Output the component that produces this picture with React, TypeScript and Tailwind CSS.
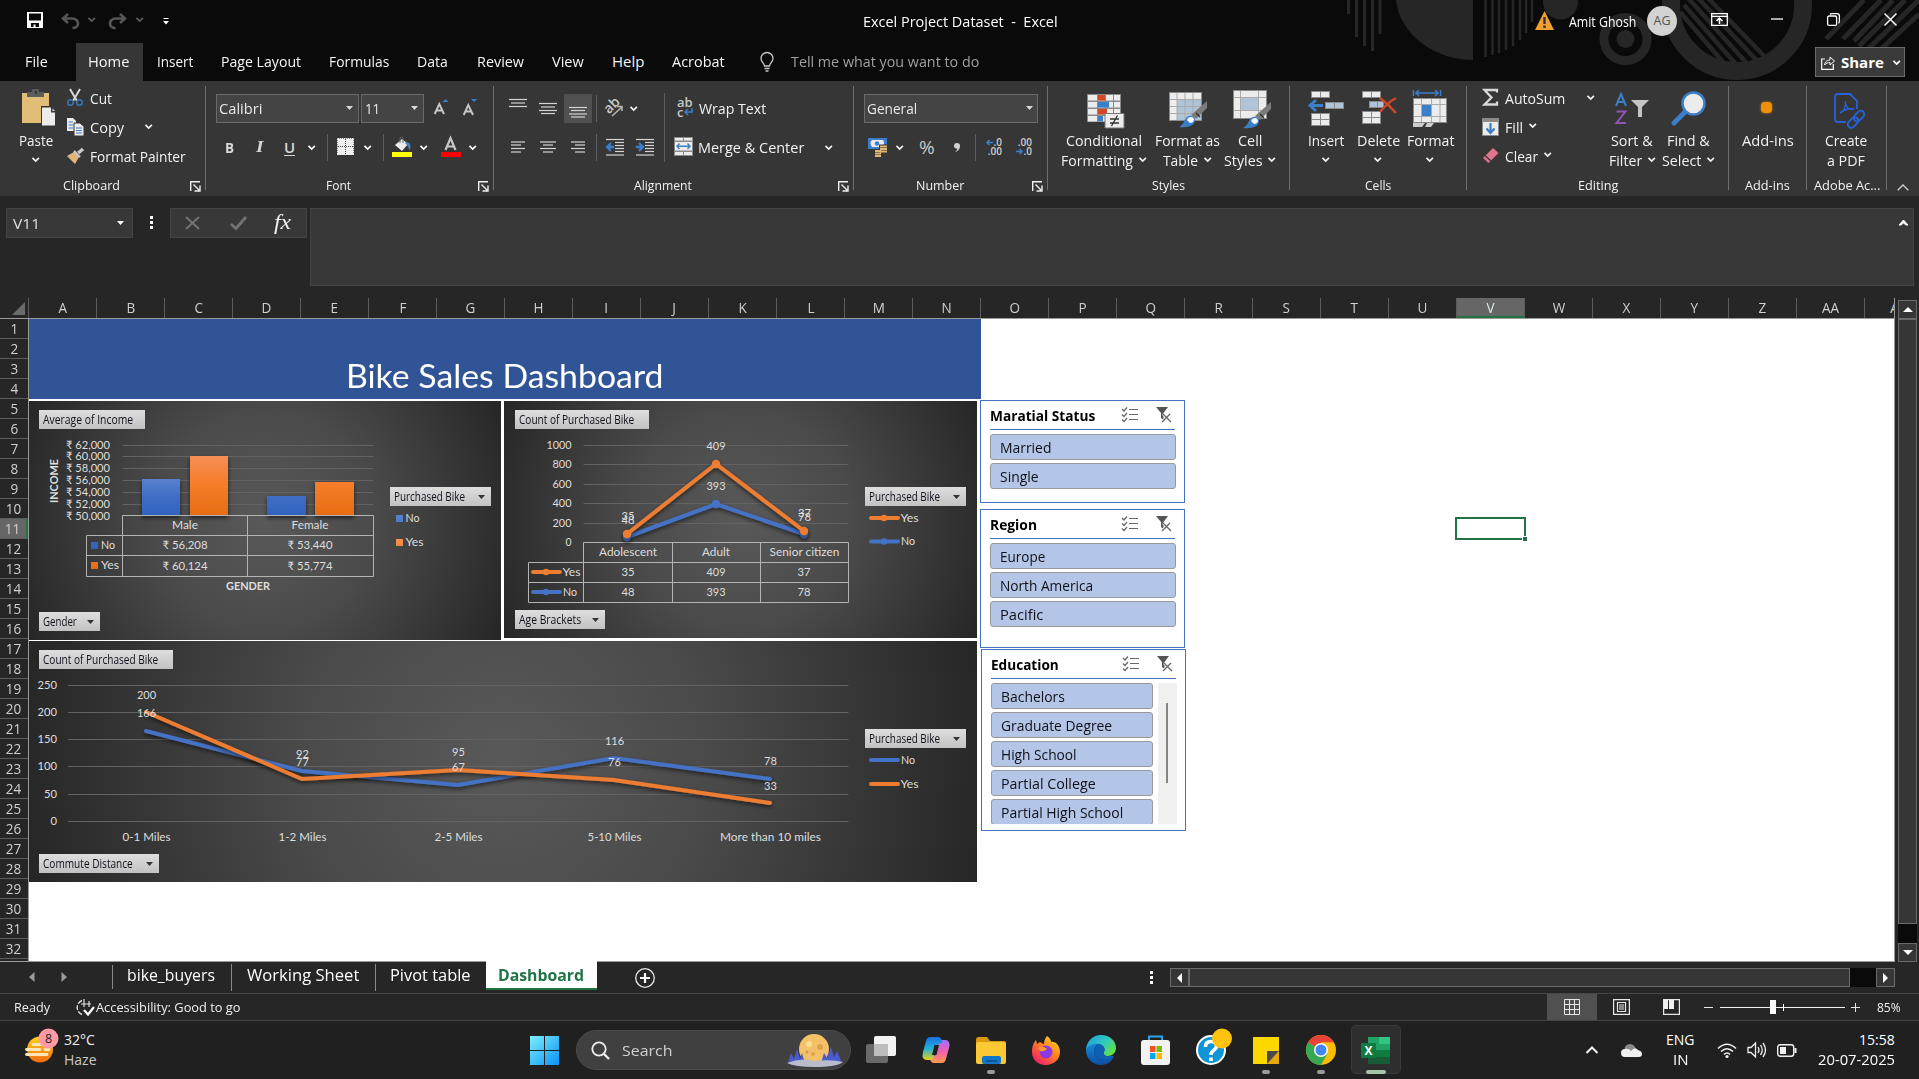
import React, { useLayoutEffect, useRef, useState } from "react";

type Kids = { children?: React.ReactNode };

/* One line of text condensed or widened to a known width. */
function Label({ w, className = "", children }: Kids & { w: number; className?: string }) {
  const ref = useRef<HTMLSpanElement>(null);
  const [scale, setScale] = useState(1);
  useLayoutEffect(() => {
    if (ref.current && ref.current.offsetWidth) setScale(w / ref.current.offsetWidth);
  }, [w]);
  return (
    <span className={"inline-block shrink-0 whitespace-pre " + className} style={{ width: w }}>
      <span ref={ref} className="inline-block origin-left" style={{ transform: `scaleX(${scale})` }}>
        {children}
      </span>
    </span>
  );
}

function Icon({ w, h, className = "", children }: Kids & { w: number; h: number; className?: string }) {
  return (
    <svg width={w} height={h} viewBox={`0 0 ${w} ${h}`} fill="none" className={"shrink-0 overflow-visible " + className}>
      {children}
    </svg>
  );
}

const Chevron = ({ className = "" }: { className?: string }) => (
  <Icon w={8} h={5} className={className}>
    <path d="M.5 .8 3.700 4 6.900 .8" stroke="currentColor" strokeWidth="1.700" />
  </Icon>
);
const Caret = ({ className = "" }: { className?: string }) => (
  <Icon w={7} h={4} className={className}>
    <path d="M0 0H7L3.5 4Z" fill="currentColor" />
  </Icon>
);
const Sep = ({ className = "" }: { className?: string }) => (
  <div className={"h-[27px] w-px shrink-0 bg-[#5e5e5e] " + className} />
);

/* ---------- Title bar ---------- */

function Backdrop() {
  const c = "#262626";
  return (
    <svg className="absolute right-0 top-0" width="579" height="81" viewBox="1340 0 579 81" fill="none">
      <g stroke={c} strokeWidth="3">
        <path d="M1348.500 0V14M1356.500 0V37M1364.500 0V46M1372.500 0V51M1380 0V34" />
      </g>
      <path d="M1396 0H1473V60C1436 60 1400 36 1396 0Z" fill={c} />
      <g stroke={c} strokeWidth="2.500">
        <path d="M1485.500 0V57M1492.500 0V55M1499 0V53M1506 0V50M1513 0V46M1520 0V40M1526 0V33M1532 0V22" />
      </g>
      <circle cx="1560.500" cy="2" r="17.500" fill={c} />
      <circle cx="1625.500" cy="39" r="21.500" stroke={c} strokeWidth="9" />
      <circle cx="1625.500" cy="39" r="9" fill={c} />
      <circle cx="1737" cy="5" r="66" stroke={c} strokeWidth="18" />
      <g stroke={c} strokeWidth="4.500">
        <path d="M1680 12 1729 69M1684 5 1741 70M1688 -2 1752 69M1697 -3 1762 66M1707 -3 1770 62" />
      </g>
      <g stroke={c} strokeWidth="5">
        <path d="M1864 0 1826 39M1881 0 1843 39M1893 0 1854 41M1905 0 1859 46M1919 0 1867 50M1919 14 1880 50" />
      </g>
    </svg>
  );
}

function TitleRow() {
  return (
    <div className="relative flex h-[43px] items-center text-[13px] text-white">
      <Icon w={17} h={17} className="ml-[27px] mt-[-2px]">
        <path d="M0 0H16V16H0Z" fill="#fff" />
        <path d="M2 1.500H14V8.500H2ZM4 11H12V15H4Z" fill="#0a0a0a" />
        <path d="M6.500 12.500h2V16h-2z" fill="#fff" />
      </Icon>
      <Icon w={18} h={16} className="ml-[17px] mt-[-2px]">
        <path d="M7 1 2 5.500 7 10M2.500 5.500H11C15 5.500 17 8 17 10.500C17 13 15 15 11.500 15" stroke="#565656" strokeWidth="2.600" />
      </Icon>
      <Chevron className="ml-[9px] mt-[-4px] text-[#5d5d5d]" />
      <Icon w={18} h={16} className="ml-[13px] mt-[-2px]">
        <path d="M11 1 16 5.500 11 10M15.500 5.500H7C3 5.500 1 8 1 10.500C1 13 3 15 6.500 15" stroke="#565656" strokeWidth="2.600" />
      </Icon>
      <Chevron className="ml-[9px] mt-[-4px] text-[#5d5d5d]" />
      <Icon w={6} h={7} className="ml-[19px]">
        <path d="M.5 .5H5.500" stroke="#fff" /><path d="M0 3H6L3 6.500Z" fill="#fff" />
      </Icon>
      <Label w={195} className="ml-[694px] text-[14px]">Excel Project Dataset  -  Excel</Label>
      <Icon w={19} h={19} className="ml-[477px] mt-[-2px]">
        <path d="M9.500 0 19 19H0Z" fill="#f0a030" />
        <path d="M9.500 6V13M9.500 14.500V17" stroke="#30343a" strokeWidth="2.400" />
      </Icon>
      <Label w={67} className="ml-[15px] mt-[-1px] text-[14px]">Amit Ghosh</Label>
      <div className="ml-[11px] mt-[-1px] flex size-[30px] items-center justify-center rounded-full bg-[#d2d2d2] text-[12.500px] text-[#555]">
        <Label w={17}>AG</Label>
      </div>
      <Icon w={17} h={13} className="ml-[34px] mt-[-4px]">
        <path d="M.7 .7H16.300V12.300H.7ZM.7 3.300H16.300" stroke="#fff" strokeWidth="1.300" />
        <path d="M8.500 11V5M5.500 8 8.500 5 11.500 8" stroke="#fff" strokeWidth="1.500" />
      </Icon>
      <Icon w={12} h={2} className="ml-[43px] mt-[-6px]"><path d="M0 1H12" stroke="#fff" strokeWidth="1.300" /></Icon>
      <Icon w={13} h={13} className="ml-[44px] mt-[-4px]">
        <rect x=".6" y="3" width="9" height="9.400" rx="1.500" stroke="#fff" strokeWidth="1.300" />
        <path d="M3 1.500C3.500 .8 4 .6 5 .6H10Q12.400 .6 12.400 3V8Q12.400 9.500 11.500 10.200" stroke="#fff" strokeWidth="1.300" />
      </Icon>
      <Icon w={13} h={13} className="ml-[44px] mt-[-4px]"><path d="M.5 .5 12.500 12.500M12.500 .5 .5 12.500" stroke="#fff" strokeWidth="1.500" /></Icon>
    </div>
  );
}

const tabs: [string, number, string][] = [
  ["Insert", 36, "ml-[14px]"], ["Page Layout", 80, "ml-[28px]"], ["Formulas", 60, "ml-[28px]"],
  ["Data", 31, "ml-[28px]"], ["Review", 47, "ml-[29px]"], ["View", 32, "ml-[28px]"],
  ["Help", 32, "ml-[28px]"], ["Acrobat", 53, "ml-[28px]"],
];

function TabRow() {
  return (
    <div className="relative flex h-[38px] items-center text-[15px] leading-5 text-[#f5f5f5]">
      <Label w={23} className="ml-[25px] -mt-[2px]">File</Label>
      <div className="ml-[28px] flex h-full w-[67px] items-center bg-[#363636] pb-[2px] pl-[12px]">
        <Label w={41}>Home</Label>
      </div>
      {tabs.map(([t, w, m]) => <Label key={t} w={w} className={"-mt-[2px] " + m}>{t}</Label>)}
      <Icon w={14} h={20} className="ml-[35px]">
        <path d="M4.500 14C4.500 11 1 10 1 6.500A6 6 0 0 1 13 6.500C13 10 9.500 11 9.500 14ZM4.500 16.500H9.500M5.500 19H8.500" stroke="#c8c8c8" strokeWidth="1.300" />
      </Icon>
      <Label w={188} className="-mt-[2px] ml-[17px] text-[#a0a0a0]">Tell me what you want to do</Label>
      <div className="ml-auto mr-[14px] flex h-[30px] w-[90px] shrink-0 items-center border border-[#6b6b6b] bg-[#3a3a3a] text-white">
        <Icon w={14} h={15} className="ml-[5px]">
          <path d="M4 4H.7V14.300H12.300V9" stroke="#fff" strokeWidth="1.200" />
          <path d="M3.500 10C4 6 7 5 9 5V2L13.500 6 9 10V7.500C7 7.500 5 8 3.500 10Z" stroke="#fff" strokeWidth="1" />
        </Icon>
        <Label w={43} className="-mt-px ml-[6px] text-[15px] font-bold">Share</Label>
        <Chevron className="ml-[9px]" />
      </div>
    </div>
  );
}

/* ---------- Ribbon ---------- */

function Group({ className, label, lw, launcher, children }: Kids & { className: string; label: string; lw: number; launcher?: boolean }) {
  return (
    <div className={"mt-[5px] flex h-[104px] shrink-0 flex-col border-r border-[#6e6e6e] " + className}>
      <div className="flex h-[90px] shrink-0">{children}</div>
      <div className={"relative flex h-[18px] shrink-0 items-center justify-center text-[13px] leading-[18px] " + (launcher ? "pr-[22px]" : "")}>
        <Label w={lw}>{label}</Label>
        {launcher && (
          <Icon w={11} h={11} className="absolute right-[4px] top-[5px]">
            <path d="M.7 10V.7H10M3.500 3.500 9 9M10 4.500V10H4.500" stroke="#f0f0f0" strokeWidth="1.400" />
          </Icon>
        )}
      </div>
    </div>
  );
}

function Big({ className, icon, a, aw, b, bw, chev }: { className: string; icon: React.ReactNode; a: string; aw: number; b?: string; bw?: number; chev?: boolean }) {
  return (
    <div className={"flex shrink-0 flex-col items-center leading-5 " + className}>
      <div className="flex h-[44px] items-center justify-center">{icon}</div>
      <Label w={aw} className="h-5">{a}</Label>
      <div className="flex h-5 items-center gap-[6px]">
        {b && <Label w={bw || 20}>{b}</Label>}
        {chev && <Chevron className="-mt-[2px]" />}
      </div>
    </div>
  );
}

const lines = (rows: number[][]) => rows.map((r, i) => <path key={i} d={`M${r[0]} ${r[2]}H${r[1]}`} stroke="#d4d4d4" strokeWidth="1.200" />);

const Brush = () => (
  <>
    <path d="M38 10V17L27 28 22 24Z" fill="#7b7b7b" />
    <path d="M27 22 31 26" stroke="#333" strokeWidth="1.500" />
    <path d="M10 36C14 34 15 31 17 27C20 23 26 25 26 29C26 34 20 37 10 36Z" fill="#3b7fc9" />
    <path d="M18 29C19 25 25 25 25 29C24 32 21 33 20 31Z" fill="#fff" />
  </>
);

function ClipboardGroup() {
  return (
    <Group className="w-[206px]" label="Clipboard" lw={57} launcher>
      <Big className="ml-[8px] w-[56px]" a="Paste" aw={34} chev icon={
        <Icon w={34} h={38} className="ml-[6px]">
          <path d="M0 4H27V34H0Z" fill="#e1bd78" />
          <path d="M5 3H10V1Q10 0 11 0H16Q17 0 17 1V3H22V8H5Z" fill="#5c5c5c" />
          <path d="M13 2h2v3h-2z" fill="#333" />
          <path d="M19 17H29L34.500 23V38H19Z" fill="#363636" />
          <path d="M20 18.500H29V23.500H33V36.500H20Z" fill="#ececec" /><path d="M30.500 19.500 33 22H30.500Z" fill="#ececec" />
        </Icon>} />
      <div className="mt-[-3px] ml-[3px] flex flex-col">
        <div className="flex h-[29px] items-center">
          <Icon w={16} h={17}>
            <path d="M3 0 10 12M13 0 6 12" stroke="#d8d8d8" strokeWidth="2" />
            <circle cx="3.500" cy="13.500" r="2.800" stroke="#3a78b8" strokeWidth="1.500" /><circle cx="12.500" cy="13.500" r="2.800" stroke="#3a78b8" strokeWidth="1.500" />
          </Icon>
          <Label w={22} className="ml-[7px]">Cut</Label>
        </div>
        <div className="flex h-[29px] items-center">
          <Icon w={17} h={18}>
            <path d="M0 0H6L9 3V13H0Z" fill="#ececec" /><path d="M1.500 4H6M1.500 7H6M1.500 10H6" stroke="#3b7fc9" strokeWidth="1.200" />
            <path d="M7 5H13L17 8.500V18H7Z" fill="#ececec" stroke="#363636" /><path d="M9 10H15M9 12.500H15M9 15H15" stroke="#3b7fc9" strokeWidth="1.200" />
          </Icon>
          <Label w={34} className="ml-[6px]">Copy</Label>
          <Chevron className="ml-[21px]" />
        </div>
        <div className="flex h-[29px] items-center">
          <Icon w={17} h={16}>
            <path d="M0 8 7 4 12 9 8 16Z" fill="#e1b577" /><path d="M7 3 13 9" stroke="#c8c8c8" strokeWidth="2.500" /><path d="M10 6 16 1" stroke="#c8c8c8" strokeWidth="3.500" /><path d="M8.500 2.500 13.500 8" stroke="#444" strokeWidth=".8" />
          </Icon>
          <Label w={96} className="ml-[6px]">Format Painter</Label>
        </div>
      </div>
    </Group>
  );
}

function FontGroup() {
  const box = "flex h-[29px] items-center border border-[#6a6a6a] bg-[#444] pb-[2px] text-[#e8e8e8] shrink-0 ";
  return (
    <Group className="w-[288px]" label="Font" lw={25} launcher>
      <div className="flex flex-col pl-[10px] pt-[8px]">
        <div className="flex items-center">
          <div className={box + "w-[143px] pl-[2px]"}><Label w={43}>Calibri</Label><Caret className="ml-auto mr-[5px] text-[#d8d8d8]" /></div>
          <div className={box + "ml-[2px] w-[63px] pl-[3px]"}><Label w={15}>11</Label><Caret className="ml-auto mr-[5px] text-[#d8d8d8]" /></div>
          <Icon w={15} h={16} className="ml-[10px] -mt-[4px]">
            <path d="M.7 15 5.300 5 10 15M2.300 11.500H8.300" stroke="#c8c8c8" strokeWidth="1.900" /><path d="M8.500 3 11.500 0 14.500 3Z" fill="#3b7fc9" />
          </Icon>
          <Icon w={15} h={16} className="ml-[14px] -mt-[3px]">
            <path d="M.7 16 5.300 6 10 16M2.300 12.500H8.300" stroke="#c8c8c8" strokeWidth="1.900" /><path d="M8 0 11 3 14 0Z" fill="#3b7fc9" />
          </Icon>
        </div>
        <div className="mt-[10px] flex h-[28px] items-center text-[#d8d8d8]">
          <Label w={9} className="-mt-px ml-[9px] font-bold">B</Label>
          <Label w={8} className="-mt-px ml-[22px] font-['Liberation_Serif'] text-[17px] font-bold italic">I</Label>
          <Label w={11} className="ml-[20px] border-b border-[#d8d8d8] font-semibold leading-4">U</Label>
          <Chevron className="ml-[13px] text-white" />
          <Sep className="ml-[11px]" />
          <Icon w={18} h={18} className="ml-[9px]">
            <path d="M0 0H17V17H0Z" fill="#efefef" /><path d="M8.500 1V16M1 8.500H16" stroke="#444" strokeDasharray="1 1" /><path d="M.5 15V.5H16.500V15" stroke="#888" strokeDasharray="1 1" />
          </Icon>
          <Chevron className="ml-[9px] text-white" />
          <Sep className="ml-[11px]" />
          <Icon w={20} h={20} className="ml-[8px]">
            <path d="M3 8 10 2 16 7 10 14Z" fill="#ececec" /><path d="M8 6V1Q9.500-1 11 1V6" stroke="#666" /><path d="M15 5Q21 7 17 14Q17 9 13 6Z" fill="#3b7fc9" /><path d="M0 15H20V20H0Z" fill="#ff0" />
          </Icon>
          <Chevron className="ml-[8px] text-white" />
          <Icon w={20} h={20} className="ml-[13px]">
            <path d="M4.500 13 9.500 1 14.500 13M6.300 9.500H13" stroke="#c8c8c8" strokeWidth="2.200" /><path d="M0 15H20V20H0Z" fill="#f00" />
          </Icon>
          <Chevron className="ml-[8px] text-white" />
        </div>
      </div>
    </Group>
  );
}

function AlignmentGroup() {
  return (
    <Group className="w-[360px]" label="Alignment" lw={58} launcher>
      <div className="flex w-[170px] flex-col pt-[8px]">
        <div className="flex h-[29px] items-center">
          <Icon w={18} h={20} className="ml-[15px] mt-[-1px]">{lines([[0, 18, 1.5], [2, 16, 5], [0, 18, 8.5]])}</Icon>
          <Icon w={18} h={20} className="ml-[12px] mt-[2px]">{lines([[0, 18, 3.5], [2, 16, 7], [0, 18, 10.5], [2, 16, 13.5]])}</Icon>
          <div className="ml-[7px] flex h-[29px] w-[28px] shrink-0 items-center justify-center bg-[#505050]">
            <Icon w={18} h={20} className="mt-[4px]">{lines([[0, 18, 6.5], [2, 16, 9.5], [0, 18, 13], [2, 16, 16]])}</Icon>
          </div>
          <Sep className="ml-[4px]" />
          <div className="relative ml-[7px] size-[20px] shrink-0">
            <span className="absolute left-[-1px] top-[-3px] -rotate-45 text-[14px] font-semibold leading-[18px] text-[#c8c8c8]">ab</span>
            <Icon w={20} h={20} className="absolute left-0 top-0"><path d="M8 17 18 8M13 7.500H18V12" stroke="#b8b8b8" strokeWidth="1.500" /></Icon>
          </div>
          <Chevron className="ml-[6px]" />
        </div>
        <div className="mt-[10px] flex h-[28px] items-center">
          <Icon w={14} h={12} className="ml-[17px]">{lines([[0, 14, 1], [0, 10, 4], [0, 14, 7.5], [0, 10, 11]])}</Icon>
          <Icon w={16} h={12} className="ml-[15px]">{lines([[0, 16, 1], [3, 13, 4], [0, 16, 7.5], [3, 13, 11]])}</Icon>
          <Icon w={14} h={12} className="ml-[15px]">{lines([[0, 14, 1], [4, 14, 4], [0, 14, 7.5], [4, 14, 11]])}</Icon>
          <Sep className="ml-[11px]" />
          <Icon w={18} h={18} className="ml-[9px]">{lines([[0, 18, 1.5], [9, 18, 4.5], [9, 18, 7.5], [9, 18, 10.5], [9, 18, 13.5], [0, 18, 17]])}<path d="M8 9H2M5 5 1 9 5 13" stroke="#3b7fc9" strokeWidth="2.300" /></Icon>
          <Icon w={18} h={18} className="ml-[12px]">{lines([[0, 18, 1.5], [9, 18, 4.5], [9, 18, 7.5], [9, 18, 10.5], [9, 18, 13.5], [0, 18, 17]])}<path d="M0 9H6M3 5 7 9 3 13" stroke="#3b7fc9" strokeWidth="2.300" /></Icon>
        </div>
      </div>
      <div className="mt-[7px] h-[69px] w-px bg-[#5e5e5e]" />
      <div className="flex flex-col pt-[8px]">
        <div className="flex h-[29px] items-center">
          <div className="relative ml-[12px] mt-[-3px] h-[20px] w-[16px] text-[13px] font-semibold leading-[10px] text-[#c8c8c8]">
            <div>ab</div><div>c</div>
            <Icon w={9} h={7} className="absolute left-[7px] top-[11px]"><path d="M8 0V4H1M4 1 1 4 4 7" stroke="#3b7fc9" strokeWidth="1.500" /></Icon>
          </div>
          <Label w={67} className="-mt-[2px] ml-[6px]">Wrap Text</Label>
        </div>
        <div className="mt-[10px] flex h-[28px] items-center">
          <Icon w={19} h={19} className="ml-[9px] mt-[-1px]">
            <path d="M0 0H19V19H0Z" fill="#8a8a8a" /><path d="M1 1H9V3.500H1ZM10 1H18V3.500H10ZM1 5H18V13.500H1ZM1 15H9V18H1ZM10 15H18V18H10Z" fill="#ececec" />
            <path d="M3 9.200H16M5.500 6.500 3 9.200 5.500 12M13.500 6.500 16 9.200 13.500 12" stroke="#3b7fc9" strokeWidth="1.400" />
          </Icon>
          <Label w={106} className="ml-[5px] -mt-px">Merge &amp; Center</Label>
          <Chevron className="ml-[21px]" />
        </div>
      </div>
    </Group>
  );
}

function NumberGroup() {
  return (
    <Group className="w-[194px]" label="Number" lw={48} launcher>
      <div className="flex flex-col pl-[10px] pt-[8px]">
        <div className="flex h-[29px] w-[174px] items-center border border-[#6a6a6a] bg-[#444] pb-[2px] pl-[2px] text-[#e8e8e8]">
          <Label w={50}>General</Label><Caret className="ml-auto mr-[4px] text-[#d8d8d8]" />
        </div>
        <div className="mt-[10px] flex h-[28px] items-center">
          <Icon w={20} h={19} className="ml-[4px]">
            <path d="M0 0H19V11H0Z" fill="#3b7fc9" /><path d="M4 2H15Q17 5 15 9H4Q1 5 4 2Z" fill="#ececec" /><circle cx="9" cy="5.500" r="2.200" fill="#3b7fc9" />
            <path d="M11 6.500H20V16H14V19H6V11H11Z" fill="#363636" />
            <path d="M12 8.500H19M12 11H19M12 13.500H19M7 13H13M7 15.500H13M7 18H13" stroke="#dfb775" strokeWidth="1.800" />
          </Icon>
          <Chevron className="ml-[8px]" />
          <Label w={16} className="ml-[15px] -mt-px text-[19px] text-[#c8c8c8]">%</Label>
          <Icon w={6} h={9} className="ml-[19px]"><path d="M0 3A3 3 0 0 1 6 3C6 6 4 8.500 1 9C3 7.500 3.500 6 3.200 5.500C1 6 0 4.500 0 3Z" fill="#d0d0d0" /></Icon>
          <Sep className="ml-[15px]" />
          <div className="relative ml-[10px] h-[18px] w-[16px] text-right text-[10px] font-semibold leading-[9px] text-[#d0d0d0]">
            <div>.0</div><div>.00</div>
            <Icon w={7} h={7} className="absolute left-0 top-[1px]"><path d="M7 3.500H1.500M3.500 1 1 3.500 3.500 6" stroke="#3b7fc9" strokeWidth="1.600" /></Icon>
          </div>
          <div className="relative ml-[14px] h-[18px] w-[16px] text-right text-[10px] font-semibold leading-[9px] text-[#d0d0d0]">
            <div>.00</div><div>.0</div>
            <Icon w={7} h={7} className="absolute left-0 top-[10px]"><path d="M0 3.500H5.500M3.500 1 6 3.500 3.500 6" stroke="#3b7fc9" strokeWidth="1.600" /></Icon>
          </div>
        </div>
      </div>
    </Group>
  );
}

function StylesGroup() {
  return (
    <Group className="w-[242px]" label="Styles" lw={33}>
      <Big className="ml-[8px] w-[96px]" a="Conditional" aw={76} b="Formatting" bw={72} chev icon={
        <Icon w={37} h={34} className="ml-[2px] mt-[5px]">
          <path d="M0 0H34V28H0Z" fill="#8a8a8a" />
          {[1, 8, 15, 22].map((y) => <path key={y} d={`M1 ${y}h9v5.500h-9zM11 ${y}h7v5.500h-7zM19 ${y}h7v5.500h-7zM27 ${y}h6v5.500h-6z`} fill="#ececec" />)}
          <path d="M11 1h7v5.500h-7zM11 15h9v5.500h-9z" fill="#d24726" /><path d="M11 8h11v5.500h-11zM11 22h5v5.500h-5z" fill="#3b7fc9" />
          <path d="M18 19.500H37V34H18Z" fill="#ececec" stroke="#777" /><path d="M23 25H32M23 29H32M30.500 21.500 24.500 32" stroke="#333" strokeWidth="1.300" />
        </Icon>} />
      <Big className="w-[70px]" a="Format as" aw={65} b="Table" bw={35} chev icon={
        <Icon w={37} h={36} className="mt-[4px]">
          <path d="M0 0H33V29H0Z" fill="#8a8a8a" /><path d="M1 1H32V28H1Z" fill="#ececec" /><path d="M8 8H32V28H8Z" fill="#b0c4d8" />
          <path d="M8 1V28M16 1V28M24 1V28M1 7.500H32M1 14.500H32M1 21.500H32" stroke="#aaa" />
          <g transform="translate(0 -1)"><Brush /></g>
        </Icon>} />
      <Big className="w-[56px]" a="Cell" aw={24} b="Styles" bw={38} chev icon={
        <Icon w={37} h={38} className="ml-[3px] mt-[2px]">
          <path d="M0 0H34V29H0Z" fill="#8a8a8a" /><path d="M1 1H33V28H1Z" fill="#ececec" /><path d="M8 8H25V20H8Z" fill="#b0c4d8" />
          <path d="M7.500 1V28M25.500 1V28M1 7.500H33M1 20.500H33" stroke="#aaa" />
          <g transform="translate(0 2)"><Brush /></g>
        </Icon>} />
    </Group>
  );
}

const Cells = ({ x, y, rows = 1 }: { x: number; y: number; rows?: number }) => (
  <g>
    <path d={`M${x} ${y}h19v${rows * 6 + 1}h-19z`} fill="#8a8a8a" />
    {Array.from({ length: rows }, (_, i) => <path key={i} d={`M${x + 1} ${y + 1 + i * 6}h8v5h-8zM${x + 10} ${y + 1 + i * 6}h8v5h-8z`} fill="#ececec" />)}
  </g>
);

function CellsGroup() {
  return (
    <Group className="w-[177px]" label="Cells" lw={26}>
      <Big className="ml-[12px] w-[48px]" a="Insert" aw={36} chev icon={
        <Icon w={36} h={35}>
          <Cells x={3} y={0} /><Cells x={3} y={22} rows={2} />
          <path d="M17 11H36V18H17Z" fill="#8a8a8a" /><path d="M18 12h8v5h-8zM27 12h8v5h-8z" fill="#b0c4d8" />
          <path d="M15 14.500H3M8 9 2 14.500 8 20" stroke="#3b7fc9" strokeWidth="3" />
        </Icon>} />
      <Big className="ml-[2px] w-[52px]" a="Delete" aw={43} chev icon={
        <Icon w={35} h={35} className="ml-[2px]">
          <Cells x={0} y={0} /><Cells x={0} y={20} rows={2} />
          <path d="M7 10H22V17H7Z" fill="#8a8a8a" /><path d="M8 11h7v5h-7zM16 11h5v5h-5z" fill="#b0c4d8" />
          <path d="M18 7Q26 13 34 22M34 7Q25 12 18 21" stroke="#d24726" strokeWidth="2.500" />
        </Icon>} />
      <Big className="ml-px w-[50px]" a="Format" aw={47} chev icon={
        <Icon w={34} h={37} className="mt-px">
          <path d="M.5 0V6M27.500 0V6M3 3H25M6 0 3 3 6 6M22 0 25 3 22 6" stroke="#3b7fc9" strokeWidth="1.500" />
          <path d="M0 8H34V33H0Z" fill="#8a8a8a" /><path d="M1 9H33V32H1Z" fill="#ececec" /><path d="M9 14H18V26H9Z" fill="#3b7fc9" />
          <path d="M8.500 9V32M18.500 9V32M27 9V32M1 14.500H33M1 26.500H33" stroke="#aaa" /><path d="M0 33H12L9 37H0ZM14 33H21L18 37H12Z" fill="#ccc" />
        </Icon>} />
    </Group>
  );
}

function EditingGroup() {
  return (
    <Group className="w-[262px]" label="Editing" lw={40}>
      <div className="ml-[15px] mt-[-3px] flex w-[123px] flex-col">
        <div className="flex h-[29px] items-center">
          <Icon w={17} h={17}><path d="M15 3.500V1H2.500L9.500 8.500 2.500 15.500H15V12.500" stroke="#d8d8d8" strokeWidth="2.300" /></Icon>
          <Label w={60} className="ml-[6px]">AutoSum</Label>
          <Chevron className="ml-[22px]" />
        </div>
        <div className="flex h-[29px] items-center">
          <Icon w={17} h={18}><path d="M0 0H17V18H0Z" fill="#8a8a8a" /><path d="M1 4H16V17H1Z" fill="#ececec" /><path d="M8.500 5V14M4.500 10.500 8.500 15 12.500 10.500" stroke="#3b7fc9" strokeWidth="2.200" /></Icon>
          <Label w={18} className="ml-[6px]">Fill</Label>
          <Chevron className="-mt-[2px] ml-[6px]" />
        </div>
        <div className="flex h-[29px] items-center">
          <Icon w={17} h={16}><path d="M11 0 16.500 5 6.500 15 1 10Z" fill="#e0748a" /><path d="M3 7.500 9 13" stroke="#363636" strokeWidth="1.200" /></Icon>
          <Label w={33} className="ml-[6px]">Clear</Label>
          <Chevron className="-mt-[2px] ml-[6px]" />
        </div>
      </div>
      <Big className="w-[54px]" a="Sort &" aw={42} b="Filter" bw={33} chev icon={
        <Icon w={34} h={31}>
          <path d="M1 13 6 1 11 13M2.500 9H9.500" stroke="#3b7fc9" strokeWidth="2" /><path d="M1.500 18.500H10.500L1.500 30H11" stroke="#8e55b5" strokeWidth="2" />
          <path d="M16 7H34L27 14V24H23V14Z" fill="#c4c4c4" />
        </Icon>} />
      <Big className="w-[58px]" a="Find &" aw={43} b="Select" bw={39} chev icon={
        <Icon w={34} h={34} className="ml-[2px]"><path d="M2 32 14 20" stroke="#3b7fc9" strokeWidth="5" strokeLinecap="round" /><circle cx="21.500" cy="12.500" r="11" fill="#ececec" stroke="#3b7fc9" strokeWidth="2.500" /></Icon>} />
    </Group>
  );
}

function Ribbon() {
  return (
    <div className="flex h-[115px] bg-[#363636] text-[15px] leading-5 text-[#f2f2f2]">
      <ClipboardGroup /><FontGroup /><AlignmentGroup /><NumberGroup /><StylesGroup /><CellsGroup /><EditingGroup />
      <Group className="w-[78px]" label="Add-ins" lw={45}>
        <Big className="w-[77px]" a="Add-ins" aw={52} icon={<div className="ml-[-3px] mt-[-2px] size-[11px] rounded-[4px] bg-[#f08f08] shadow-[0_0_3px_#c07818]" />} />
      </Group>
      <Group className="w-[80px]" label="Adobe Ac..." lw={66}>
        <Big className="w-[78px]" a="Create" aw={42} b="a PDF" bw={38} icon={
          <Icon w={31} h={35} className="ml-[6px] mt-[5px]">
            <path d="M12 29H4Q1 29 1 26V4Q1 1 4 1H16L23 8V16" stroke="#2662d9" strokeWidth="1.800" />
            <path d="M6 20C10 18 12 13 11.500 8M11.500 11C13 16 16 17 19 16C14 15 10 17 6 20" stroke="#2662d9" strokeWidth="1.400" />
            <g stroke="#2662d9" strokeWidth="1.800"><rect x="19" y="19.500" width="12" height="7" rx="3.500" transform="rotate(-45 25 23)" /><rect x="13" y="26" width="12" height="7" rx="3.500" transform="rotate(-45 19 29.500)" /></g>
          </Icon>} />
      </Group>
      <Icon w={12} h={7} className="ml-[10px] mt-[103px]"><path d="M.7 6.300 6 1 11.300 6.300" stroke="#d0d0d0" strokeWidth="1.300" /></Icon>
    </div>
  );
}

function FormulaBar() {
  return (
    <div className="flex h-[102px] items-start bg-[#262626] pt-[12px] text-[15px] text-[#e0e0e0]">
      <div className="ml-[6px] flex h-[30px] w-[127px] items-center border border-[#444] bg-[#383838] pl-[6px]">
        <Label w={27}>V11</Label><Caret className="ml-auto mr-[8px] text-white" />
      </div>
      <div className="ml-[17px] mt-[8px] flex w-[3px] flex-col gap-[2px]">
        {[0, 1, 2].map((i) => <div key={i} className="size-[3px] bg-white" />)}
      </div>
      <div className="ml-[17px] flex h-[30px] w-[137px] items-center border border-[#444] bg-[#383838]">
        <Icon w={15} h={14} className="ml-[14px]"><path d="M1 1 14 13M14 1 1 13" stroke="#737373" strokeWidth="2" /></Icon>
        <Icon w={17} h={14} className="ml-[30px]"><path d="M1 8 6 12.500 16 1" stroke="#737373" strokeWidth="2.800" /></Icon>
        <Label w={17} className="-mt-[2px] ml-[27px] font-['Liberation_Serif'] text-[21px] italic leading-5 text-[#f0f0f0]">fx</Label>
      </div>
      <div className="ml-[3px] flex h-[78px] w-[1604px] justify-end border border-[#444] bg-[#383838] pr-[5px] pt-[10px]">
        <Icon w={9} h={6}><path d="M0 6 4.500 1 9 6 7 6 4.500 4 2 6Z" fill="#fff" stroke="#fff" /></Icon>
      </div>
    </div>
  );
}

/* ---------- Worksheet ---------- */

const colNames = [..."ABCDEFGHIJKLMNOPQRSTUVWXYZ", "AA"];

function ColumnHeader() {
  return (
    <div className="flex h-[21px] overflow-hidden border-b border-[#9a9a9a] bg-[#262626] text-[15px] leading-[18px] text-[#d0d0d0]">
      <div className="flex w-[29px] shrink-0 items-end justify-end border-r border-[#5c5c5c] pb-[3px] pr-[3px]">
        <Icon w={13} h={13}><path d="M13 0V13H0Z" fill="#6b6b6b" /></Icon>
      </div>
      {colNames.map((c) => (
        <div key={c} className={"w-[68px] shrink-0 border-r border-[#5c5c5c] text-center " + (c === "V" ? "border-b-2 border-b-[#217346] bg-[#666] text-[#dfe9e2]" : "")}>
          <span className="inline-block scale-x-90">{c}</span>
        </div>
      ))}
      <div className="w-[29px] shrink-0 overflow-hidden pl-[25px]">A</div>
    </div>
  );
}

function RowHeader() {
  return (
    <div className="flex w-[29px] shrink-0 flex-col overflow-hidden border-r border-[#9a9a9a] bg-[#262626] text-[15px] leading-[19px] text-[#d0d0d0]">
      {Array.from({ length: 32 }, (_, i) => (
        <div key={i} className={"h-[20px] shrink-0 border-b border-[#5c5c5c] text-center " + (i === 10 ? "border-r-2 border-r-[#217346] bg-[#666]" : "")}>
          <span className="inline-block scale-x-90">{i + 1}</span>
        </div>
      ))}
    </div>
  );
}

function FieldButton({ className, text, w, drop }: { className: string; text: string; w: number; drop?: boolean }) {
  return (
    <div className={"absolute flex h-[19px] items-center bg-linear-to-b from-[#dedede] to-[#c2c2c2] pl-[4px] pr-[6px] text-[12px] leading-[18px] text-[#10101c] " + className}>
      <Label w={w}>{text}</Label>
      {drop && <Caret className="ml-auto text-[#333]" />}
    </div>
  );
}

function T({ x, y, w, a = "middle", bold, children }: { x: number; y: number; w: number; a?: "start" | "middle" | "end"; bold?: boolean; children: string }) {
  return (
    <text x={x} y={y + 4} textLength={w} lengthAdjust="spacingAndGlyphs" textAnchor={a} fontSize="11.500" fontWeight={bold ? 700 : 400} fill="#dedede">{children}</text>
  );
}

const BLUE = "#4472c4";
const ORANGE = "#ed7d31";
const GRID = "#636363";
const chartBg = "absolute bg-[radial-gradient(circle_farthest-corner_at_50%_50%,#595959,#4a4a4a_42%,#262626)] ";
const chartSvg = "block font-[Lato,'Noto_Sans',sans-serif]";

function Defs() {
  return (
    <defs>
      <linearGradient id="gb" x2="0" y2="1"><stop stopColor="#5a82cf" /><stop offset=".5" stopColor="#3f6dc6" /><stop offset="1" stopColor="#3062bb" /></linearGradient>
      <linearGradient id="go" x2="0" y2="1"><stop stopColor="#f58f55" /><stop offset=".5" stopColor="#f67b28" /><stop offset="1" stopColor="#e66c14" /></linearGradient>
      <filter id="sh" x="-20%" y="-50%" width="140%" height="200%"><feDropShadow dx="0" dy="2" stdDeviation="2" floodColor="#000" floodOpacity=".6" /></filter>
    </defs>
  );
}

function IncomeChart() {
  const ys = [445.5, 456.5, 468.5, 480.5, 492.5, 504.5, 516.5];
  return (
    <div className={chartBg + "left-0 top-[82px] h-[239px] w-[472px]"}>
      <svg width="472" height="239" viewBox="29 401 472 239" className={chartSvg}>
        <Defs />
        {ys.slice(0, 6).map((y) => <path key={y} d={`M122.500 ${y}H373.500`} stroke={GRID} />)}
        {ys.map((y, i) => <T key={y} x={110} y={y - 0.5} w={44} a="end">{`₹ ${62 - i * 2},000`}</T>)}
        <g filter="url(#sh)">
          <path d="M142 479h38v37h-38zM267 496h39v20h-39z" fill="url(#gb)" />
          <path d="M190 456h38v60h-38zM315 482h39v34h-39z" fill="url(#go)" />
        </g>
        <path d="M122.500 515.500H373.500V576.500H86.500V535.500H373.500M86.500 555.500H373.500M122.500 515.500V576.500M247.500 515.500V576.500" stroke="#b4b4b4" fill="none" />
        <T x={185} y={525} w={26}>Male</T><T x={310} y={525} w={37}>Female</T>
        <T x={185} y={545} w={45}>₹ 56,208</T><T x={310} y={545} w={45}>₹ 53,440</T>
        <T x={185} y={566} w={45}>₹ 60,124</T><T x={310} y={566} w={45}>₹ 55,774</T>
        <path d="M91 542h7v7h-7zM396 515h7v7h-7z" fill="url(#gb)" /><path d="M91 562h7v7h-7zM396 539h7v7h-7z" fill="url(#go)" />
        <T x={101} y={545} w={14} a="start">No</T><T x={101} y={565} w={18} a="start">Yes</T>
        <T x={405.500} y={518} w={14} a="start">No</T><T x={405.500} y={542} w={18} a="start">Yes</T>
        <T x={248} y={586} w={44} bold>GENDER</T>
        <g transform="rotate(-90 54 481)"><T x={54} y={481} w={44} bold>INCOME</T></g>
      </svg>
      <FieldButton className="left-[10px] top-[9px] w-[106px]" text="Average of Income" w={90} />
      <FieldButton className="left-[361px] top-[86px] w-[101px]" text="Purchased Bike" w={71} drop />
      <FieldButton className="left-[10px] top-[211px] w-[61px]" text="Gender" w={34} drop />
    </div>
  );
}

const Key = ({ x, y, color, dot }: { x: number; y: number; color: string; dot?: boolean }) => (
  <g>
    <path d={`M${x + 2} ${y}h27`} stroke={color} strokeWidth="4" strokeLinecap="round" />
    {dot && <circle cx={x + 15} cy={y} r="3.300" fill={color} />}
  </g>
);

function AgeChart() {
  const no = "627,537 716,504 804,534";
  const yes = "627,534 716,464 804,531";
  const dots = (pts: string, c: string) => pts.split(" ").map((p) => { const [x, y] = p.split(","); return <circle key={p} cx={x} cy={y} r="4.200" fill={c} />; });
  return (
    <div className={chartBg + "left-[475px] top-[82px] h-[237px] w-[473px]"}>
      <svg width="473" height="237" viewBox="504 401 473 237" className={chartSvg}>
        {[445.5, 464.5, 484.5, 503.5, 523.5].map((y) => <path key={y} d={`M583.500 ${y}H848.500`} stroke={GRID} />)}
        {[["1000", 445, 25], ["800", 464, 19], ["600", 484, 19], ["400", 503, 19], ["200", 523, 19], ["0", 542, 6]].map(([t, y, w]) => <T key={t} x={571.500} y={y as number} w={w as number} a="end">{t as string}</T>)}
        <path d="M583.500 542.500H848.500V602.500H528.500V562.500H848.500M528.500 582.500H848.500M583.500 542.500V602.500M672.500 542.500V602.500M760.500 542.500V602.500" stroke="#b4b4b4" fill="none" />
        <g filter="url(#sh)"><polyline points={no} stroke={BLUE} strokeWidth="4" fill="none" />{dots(no, BLUE)}</g>
        <g filter="url(#sh)"><polyline points={yes} stroke={ORANGE} strokeWidth="4" fill="none" />{dots(yes, ORANGE)}</g>
        <T x={716} y={446} w={19}>409</T><T x={716} y={486} w={19}>393</T>
        <T x={628} y={516} w={13}>35</T><T x={628} y={520} w={13}>48</T>
        <T x={804.500} y={513} w={13}>37</T><T x={804.500} y={517} w={13}>78</T>
        <T x={628} y={552} w={58}>Adolescent</T><T x={716} y={552} w={28}>Adult</T><T x={804.500} y={552} w={70}>Senior citizen</T>
        <T x={628} y={572} w={13}>35</T><T x={716} y={572} w={19}>409</T><T x={804} y={572} w={13}>37</T>
        <T x={628} y={592} w={13}>48</T><T x={716} y={592} w={19}>393</T><T x={804} y={592} w={13}>78</T>
        <Key x={531} y={572} color={ORANGE} dot /><T x={562.500} y={572} w={18} a="start">Yes</T>
        <Key x={531} y={592} color={BLUE} dot /><T x={563} y={592} w={14} a="start">No</T>
        <Key x={869} y={518} color={ORANGE} dot /><T x={900.500} y={518} w={18} a="start">Yes</T>
        <Key x={869} y={541.500} color={BLUE} dot /><T x={901} y={541} w={14} a="start">No</T>
      </svg>
      <FieldButton className="left-[11px] top-[9px] w-[134px]" text="Count of Purchased Bike" w={115} />
      <FieldButton className="left-[361px] top-[86px] w-[101px]" text="Purchased Bike" w={71} drop />
      <FieldButton className="left-[11px] top-[209px] w-[90px]" text="Age Brackets" w={62} drop />
    </div>
  );
}

function CommuteChart() {
  const grid = [685.5, 712.5, 739.5, 766.5, 794.5, 821.5];
  const cats: [string, number, number][] = [["0-1 Miles", 146.5, 48], ["1-2 Miles", 302.5, 48], ["2-5 Miles", 458.5, 48], ["5-10 Miles", 614.5, 54], ["More than 10 miles", 770.5, 101]];
  const marks: [string, number, number][] = [["200", 146.5, 695], ["166", 146.5, 713], ["92", 302.5, 754], ["77", 302.5, 762], ["95", 458.5, 752], ["67", 458.5, 767], ["116", 614.5, 741], ["76", 614.5, 762], ["78", 770.5, 761], ["33", 770.5, 786]];
  return (
    <div className={chartBg + "left-0 top-[322px] h-[241px] w-[948px]"}>
      <svg width="948" height="241" viewBox="29 641 948 241" className={chartSvg}>
        {grid.map((y) => <path key={y} d={`M68 ${y}H848.500`} stroke={GRID} />)}
        {grid.map((y, i) => <T key={y} x={57} y={y - 0.5} w={i < 4 ? 19.500 : i === 4 ? 13 : 6.500} a="end">{String(250 - i * 50)}</T>)}
        <polyline filter="url(#sh)" points="146,731 302,771 458,785 614,758 770,779" stroke={BLUE} strokeWidth="4" strokeLinecap="round" fill="none" />
        <polyline filter="url(#sh)" points="146,712 302,779 458,770 614,780 770,803" stroke={ORANGE} strokeWidth="4" strokeLinecap="round" fill="none" />
        {marks.map(([t, x, y]) => <T key={t} x={x} y={y} w={t.length * 6.4}>{t}</T>)}
        {cats.map(([t, x, w]) => <T key={t} x={x} y={837} w={w}>{t}</T>)}
        <Key x={869} y={760} color={BLUE} /><T x={901} y={760} w={14} a="start">No</T>
        <Key x={869} y={784} color={ORANGE} /><T x={900.500} y={784} w={18} a="start">Yes</T>
      </svg>
      <FieldButton className="left-[10px] top-[9px] w-[134px]" text="Count of Purchased Bike" w={115} />
      <FieldButton className="left-[836px] top-[88px] w-[101px]" text="Purchased Bike" w={71} drop />
      <FieldButton className="left-[10px] top-[213px] w-[120px]" text="Commute Distance" w={90} drop />
    </div>
  );
}

function Slicer({ className, title, tw, items, scroll, pt }: { className: string; title: string; tw: number; items: [string, number][]; scroll?: boolean; pt: string }) {
  return (
    <div className={"absolute border border-[#4472c4] bg-white pl-[9px] pr-[8px] text-[15px] text-[#101018] " + className}>
      <div className={"mr-px flex items-center border-b border-[#4472c4] pb-px font-bold leading-[20px] text-black " + pt}>
        <Label w={tw}>{title}</Label>
        <Icon w={16} h={15} className="ml-auto mr-[18px]">
          <path d="M0 2 2 4 5 .5M0 7.500 2 9.500 5 6M0 12.500 2 14.500 5 11" stroke="#666" strokeWidth="1.200" /><path d="M7 2.500H16M7 7.500H16M7 12.500H16" stroke="#666" />
        </Icon>
        <Icon w={15} h={15} className="mr-[4px]">
          <path d="M0 0H12L7.500 6V13L5 11V6Z" fill="#555" /><path d="M7 7 15 15M14 7 6 15" stroke="#fff" strokeWidth="2.500" /><path d="M7 7 15 15M14 7 6 15" stroke="#666" strokeWidth="1.300" />
        </Icon>
      </div>
      <div className={"mt-[4px] flex " + (scroll ? "h-[141px] overflow-hidden" : "")}>
        <div className="flex grow flex-col gap-[3px]">
          {items.map(([t, w]) => (
            <div key={t} className="flex h-[26px] shrink-0 items-center rounded-[3px] border border-[#999] bg-[#b4c6e7] pb-px pl-[9px] leading-5"><Label w={w}>{t}</Label></div>
          ))}
        </div>
        {scroll && <div className="ml-[5px] h-full w-[19px] shrink-0 bg-[#f0f0f0] pl-[8px] pt-[20px]"><div className="h-[80px] w-[2px] bg-[#858585]" /></div>}
      </div>
    </div>
  );
}

function Sheet() {
  return (
    <div className="relative grow overflow-hidden bg-white">
      <div className="flex h-[80px] w-[952px] items-end justify-center bg-[#305496] pb-[4px] pr-[2px] font-[Lato] text-[32px] leading-[38px] text-white">
        <Label w={317}>Bike Sales Dashboard</Label>
      </div>
      <IncomeChart />
      <AgeChart />
      <CommuteChart />
      <Slicer className="left-[951px] top-[81px] h-[103px] w-[205px]" pt="h-[29px]" title="Maratial Status" tw={105} items={[["Married", 51], ["Single", 39]]} />
      <Slicer className="left-[951px] top-[190px] h-[139px] w-[205px]" pt="h-[29px]" title="Region" tw={47} items={[["Europe", 45], ["North America", 93], ["Pacific", 43]]} />
      <Slicer className="left-[952px] top-[330px] h-[182px] w-[205px]" pt="h-[29px]" title="Education" tw={68} scroll items={[["Bachelors", 64], ["Graduate Degree", 111], ["High School", 76], ["Partial College", 95], ["Partial High School", 122]]} />
      <div className="absolute left-[1426px] top-[198px] h-[23px] w-[71px] border-2 border-[#217346]">
        <div className="absolute bottom-[-3px] right-[-3px] size-[5px] border-l border-t border-white bg-[#217346]" />
      </div>
    </div>
  );
}

const scrollBtn = "flex shrink-0 items-center justify-center border border-[#6b6b6b] bg-[#363636] ";

function Worksheet() {
  return (
    <div className="flex h-[664px] bg-[#262626]">
      <div className="flex w-[1895px] flex-col border-b border-r border-[#9a9a9a]">
        <ColumnHeader />
        <div className="flex min-h-0 grow"><RowHeader /><Sheet /></div>
      </div>
      <div className="ml-[3px] mt-[2px] flex w-[19px] flex-col">
        <div className={scrollBtn + "h-[19px]"}><Icon w={10} h={5}><path d="M0 5 5 0 10 5Z" fill="#fff" /></Icon></div>
        <div className="h-[605px] border border-[#6b6b6b] bg-[#363636]" />
        <div className="grow bg-[#0a0a0a]" />
        <div className={scrollBtn + "h-[19px]"}><Icon w={10} h={5}><path d="M0 0 5 5 10 0Z" fill="#fff" /></Icon></div>
      </div>
    </div>
  );
}

function SheetTabs() {
  return (
    <div className="flex h-[32px] items-start border-b border-[#464646] bg-[#262626] text-[16px] text-white">
      <Icon w={6} h={10} className="ml-[29px] mt-[10px]"><path d="M5.500 0V10L0 5Z" fill="#9a9a9a" /></Icon>
      <Icon w={6} h={10} className="ml-[26px] mt-[10px]"><path d="M.5 0V10L6 5Z" fill="#9a9a9a" /></Icon>
      <div className="ml-[45px] mt-[3px] flex h-[24px] items-center border-l border-[#8a8a8a] pb-[5px]">
        <Label w={88} className="ml-[14px]">bike_buyers</Label>
        <Sep className="ml-[16px] mt-[5px] bg-[#8a8a8a]" />
        <Label w={112} className="ml-[15px]">Working Sheet</Label>
        <Sep className="ml-[16px] mt-[5px] bg-[#8a8a8a]" />
        <Label w={81} className="ml-[14px]">Pivot table</Label>
      </div>
      <div className="ml-[15px] mt-[-1px] flex h-[29px] w-[111px] items-center border-b-2 border-[#217346] bg-white pl-[12px] font-bold text-[#217346]">
        <Label w={86}>Dashboard</Label>
      </div>
      <Icon w={20} h={20} className="ml-[38px] mt-[6px]"><circle cx="10" cy="10" r="9.300" stroke="#e8e8e8" strokeWidth="1.300" /><path d="M5 10H15M10 5V15" stroke="#fff" strokeWidth="2.200" /></Icon>
      <div className="ml-[495px] mt-[9px] flex w-[3px] flex-col gap-[2px]">
        {[0, 1, 2].map((i) => <div key={i} className="size-[3px] bg-white" />)}
      </div>
      <div className={scrollBtn + "ml-[17px] mt-[6px] h-[19px] w-[19px]"}><Icon w={5} h={10}><path d="M5 0V10L0 5Z" fill="#fff" /></Icon></div>
      <div className="mt-[6px] h-[19px] w-[661px] border border-[#6b6b6b] bg-[#363636]" />
      <div className="mt-[6px] h-[19px] w-[26px] bg-[#0a0a0a]" />
      <div className={scrollBtn + "mt-[6px] h-[19px] w-[19px]"}><Icon w={5} h={10}><path d="M0 0V10L5 5Z" fill="#fff" /></Icon></div>
    </div>
  );
}

function StatusBar() {
  return (
    <div className="flex h-[27px] items-center border-b border-[#464646] bg-[#262626] text-[13px] text-[#f0f0f0]">
      <Label w={36} className="ml-[14px] mt-[2px]">Ready</Label>
      <Icon w={19} h={17} className="ml-[25px] mt-px">
        <path d="M7 1.500A7.500 7.500 0 0 0 7 15.500" stroke="#e0e0e0" strokeWidth="1.400" strokeDasharray="5 1.500" /><path d="M9 0V8M6 5H16M14 2V8" stroke="#e0e0e0" strokeWidth="1.200" />
        <path d="M9 11 13 15.500 19 8" stroke="#fff" strokeWidth="2.200" />
      </Icon>
      <Label w={145} className="ml-[2px] mt-[2px]">Accessibility: Good to go</Label>
      <div className="ml-auto flex h-full w-[50px] items-center justify-center bg-[#505050]">
        <Icon w={16} h={16}><path d="M.5 .5H15.500V15.500H.5ZM5.500 0V16M10.500 0V16M0 5.500H16M0 10.500H16" stroke="#e8e8e8" /></Icon>
      </div>
      <Icon w={17} h={16} className="ml-[16px]"><path d="M.6 .6H16.400V15.400H.6ZM4.500 3.500H12.500V12.500H4.500ZM6 6H11M6 8H11M6 10H11" stroke="#e8e8e8" strokeWidth="1.200" /></Icon>
      <Icon w={17} h={16} className="ml-[33px]"><path d="M.6 .6H16.400V15.400H.6Z" stroke="#e8e8e8" strokeWidth="1.200" /><path d="M1 1H5V10H1ZM6 1H11V10H6Z" fill="#f0f0f0" /></Icon>
      <Icon w={9} h={9} className="ml-[24px]"><path d="M0 4.500H9" stroke="#e8e8e8" /></Icon>
      <div className="relative ml-[7px] flex h-full w-[125px] items-center">
        <div className="h-px w-full bg-[#f0f0f0]" />
        <div className="absolute left-[50px] top-[6px] h-[14px] w-[6px] bg-white" />
        <div className="absolute left-[63px] top-[10px] h-[7px] w-px bg-white" />
      </div>
      <Icon w={9} h={9} className="ml-[6px]"><path d="M0 4.500H9M4.500 0V9" stroke="#e8e8e8" /></Icon>
      <Label w={24} className="ml-[17px] mr-[18px] mt-[2px]">85%</Label>
    </div>
  );
}

/* ---------- Taskbar ---------- */

function TaskItem({ children, mark = "" }: Kids & { mark?: string }) {
  return (
    <div className="relative flex w-[55px] shrink-0 items-center justify-center">
      {mark === "wide" && <div className="absolute left-[3px] top-[4px] h-[49px] w-[50px] rounded-[5px] border border-[#3a3a3a] bg-[#2e2e2e]" />}
      <div className="relative">{children}</div>
      {mark === "dot" && <div className="absolute bottom-[5px] left-[24px] h-[4px] w-[8px] rounded-full bg-[#9a9a9a]" />}
      {mark === "wide" && <div className="absolute bottom-[5px] left-[18px] h-[4px] w-[20px] rounded-full bg-[#a9c4ad]" />}
    </div>
  );
}

function Taskbar() {
  return (
    <div className="flex h-[58px] items-stretch bg-[#202020] text-[15px] text-white">
      <Icon w={34} h={36} className="ml-[25px] mt-[7px]">
        <defs><linearGradient id="sun" x2="0" y2="1"><stop stopColor="#ffd21e" /><stop offset="1" stopColor="#f06a10" /></linearGradient></defs>
        <circle cx="15" cy="21.500" r="13" fill="url(#sun)" />
        <path d="M8 16.500H24M1.500 21.500H15M20 21.500H24M1.500 26.500H22" stroke="#ffe6b8" strokeWidth="2.800" strokeLinecap="round" />
        <circle cx="23.500" cy="10.500" r="10" fill="#ff99a4" />
        <text x="23.500" y="15" textAnchor="middle" fontSize="12.500" fill="#222">8</text>
      </Icon>
      <div className="ml-[5px] flex flex-col justify-center text-[14px] leading-[20px] text-[#f0f0f0]">
        <Label w={31}>32°C</Label>
        <Label w={33} className="text-[#c8c8c8]">Haze</Label>
      </div>
      <Icon w={29} h={29} className="ml-[433px] mt-[15px]">
        <defs><linearGradient id="win" x2="1" y2="1"><stop stopColor="#7cf0ff" /><stop offset="1" stopColor="#0a90f5" /></linearGradient></defs>
        <path d="M0 0H14V14H0ZM15 0H29V14H15ZM0 15H14V29H0ZM15 15H29V29H15Z" fill="url(#win)" />
      </Icon>
      <div className="ml-[17px] mt-[9px] flex h-[40px] w-[275px] shrink-0 items-center rounded-full border border-[#4a4a4a] bg-[#404040]">
        <Icon w={19} h={19} className="ml-[14px]"><circle cx="8" cy="8" r="6.700" stroke="#f0f0f0" strokeWidth="1.800" /><path d="M13 13 18 18" stroke="#f0f0f0" strokeWidth="2.400" /></Icon>
        <Label w={51} className="ml-[12px] text-[#d0d0d0]">Search</Label>
        <Icon w={56} h={34} className="ml-auto mr-[7px]">
          <circle cx="27" cy="16" r="15" fill="#f3c168" /><circle cx="22" cy="11" r="3" fill="#fbdc94" /><circle cx="33" cy="14" r="3" fill="#dfa24e" /><circle cx="26" cy="21" r="2" fill="#dfa24e" /><circle cx="20" cy="19" r="1.500" fill="#e28d55" />
          <path d="M1 30 4 20 7 26 10 16 13 26 15 20 18 30ZM34 30 37 20 40 25 44 14 47 24 50 18 55 30Z" fill="#4a5bd0" />
          <path d="M0 30Q14 24 28 28Q44 26 56 29Q50 34 28 34Q8 34 0 30Z" fill="#b9bccb" />
        </Icon>
      </div>
      <div className="ml-[2px] flex shrink-0">
        <TaskItem><Icon w={30} h={30}><rect x="8" y="1" width="22" height="20" rx="2" fill="#f2f2f2" /><rect x="0" y="9" width="22" height="19" rx="2" fill="#777" fillOpacity=".85" /><path d="M8 9H22V21H8Z" fill="#bdbdbd" /></Icon></TaskItem>
        <TaskItem>
          <Icon w={28} h={26}>
            <defs>
              <linearGradient id="cl" x2="0" y2="1"><stop stopColor="#1b6fe0" /><stop offset=".5" stopColor="#22b0d8" /><stop offset="1" stopColor="#e8d21a" /></linearGradient>
              <linearGradient id="cr" x2="0" y2="1"><stop stopColor="#a070ff" /><stop offset=".5" stopColor="#f060b0" /><stop offset="1" stopColor="#ff9a4a" /></linearGradient>
            </defs>
            <path d="M20 26H12Q9 26 8 22L7.500 19H13L16 6Q17 3 20 3H23Q29 3 27 11L24 22Q23 26 20 26Z" fill="url(#cr)" />
            <path d="M8 0H16Q19 0 20 4L20.500 6H19Q16 6 15 10L12 20Q11 23 8 23H5Q-1 23 1 15L4 4Q5 0 8 0Z" fill="url(#cl)" />
            <path d="M12.500 8H17L14.500 18H10Z" fill="#202020" />
          </Icon>
        </TaskItem>
        <TaskItem mark="dot"><Icon w={30} h={27}><path d="M0 3Q0 0 3 0H11L14 4H28Q30 4 30 6V10H0Z" fill="#d99a10" /><rect y="5" width="30" height="22" rx="2" fill="#fcc934" /><rect x="6" y="19" width="19" height="8" rx="2" fill="#1277c8" /><path d="M10 24H21" stroke="#0a4d88" strokeWidth="1.500" /></Icon></TaskItem>
        <TaskItem>
          <Icon w={30} h={29}>
            <defs><linearGradient id="ff" x1="1" x2=".2" y2="1"><stop stopColor="#ffe83a" /><stop offset=".45" stopColor="#ff8a1c" /><stop offset="1" stopColor="#f01a6c" /></linearGradient></defs>
            <path d="M16 0C19 2 20 4 20 6C24 5 29 9 29 16C29 24 22 29 15 29C6 29 1 23 1 16C1 10 3 6 5 4L6 8L9 6C11 7 12 8 13 8C13 5 14 2 16 0Z" fill="url(#ff)" /><circle cx="15" cy="16" r="6.500" fill="#8a3ae0" /><path d="M7 12Q12 9 16 13Q13 16 9 15Z" fill="#ff9a2a" />
          </Icon>
        </TaskItem>
        <TaskItem>
          <Icon w={30} h={30}>
            <defs>
              <linearGradient id="ea" x2="1" y2=".6"><stop stopColor="#1b9de0" /><stop offset=".6" stopColor="#30c8c0" /><stop offset="1" stopColor="#5fe04a" /></linearGradient>
              <linearGradient id="eb" x2="0" y2="1"><stop stopColor="#1689dc" /><stop offset="1" stopColor="#0c4fa0" /></linearGradient>
            </defs>
            <path d="M0 16C0 6 7 0 15 0C24 0 30 6 30 13C30 18 26 21 22 21C18 21 17 19 18 17C20 13 16 9 11 9C6 9 2 12 0 16Z" fill="url(#ea)" />
            <path d="M0 15C2 10 7 8 12 9C8 11 7 16 9 20C12 26 20 27 28 22C25 27 20 30 15 30C6 30 0 23 0 15Z" fill="url(#eb)" />
            <path d="M12 9C17 9 20 13 18 17C17 19 19 21 22 21C25 21 27 20 28 22C20 27 12 26 9 20C7 16 8 11 12 9Z" fill="#0f5fb5" />
          </Icon>
        </TaskItem>
        <TaskItem><Icon w={29} h={30}><path d="M8 6V1.500H21V6" stroke="#2aa4e8" strokeWidth="2" /><rect y="5" width="29" height="25" rx="3" fill="#f2f2f2" /><path d="M9 11h5.500v6H9z" fill="#f25022" /><path d="M15.500 11H21v6h-5.500z" fill="#7fba00" /><path d="M9 18h5.500v6H9z" fill="#00a4ef" /><path d="M15.500 18H21v6h-5.500z" fill="#ffb900" /></Icon></TaskItem>
        <TaskItem>
          <Icon w={30} h={30}>
            <circle cx="15" cy="15" r="14" fill="#0f94d8" stroke="#fff" strokeWidth="2" />
            <path d="M9.500 12Q9.500 6.500 15 6.500T20.500 11.500C20.500 15 15 15 15 20M15 22.500V26" stroke="#fff" strokeWidth="3.600" />
            <circle cx="26" cy="3.500" r="10" fill="#ffc20e" />
          </Icon>
        </TaskItem>
        <TaskItem mark="dot"><Icon w={26} h={27}><path d="M0 0H26V14L14 27H0Z" fill="#fdd700" /><path d="M14 27V14H26Z" fill="#4a4a4a" /><path d="M14 27 26 14V27Z" fill="#e8a80c" /></Icon></TaskItem>
        <TaskItem mark="dot">
          <Icon w={30} h={30}>
            <circle cx="15" cy="15" r="15" fill="#fbbc05" />
            <path d="M15 15 2 7.500A15 15 0 0 1 28 7.500H15Z" fill="#ea4335" /><path d="M15 15 2 7.500A15 15 0 0 0 15 30L21.500 18.500Z" fill="#34a853" /><path d="M15 7.500H28L22 18Z" fill="#fbbc05" />
            <circle cx="15" cy="15" r="7" fill="#fff" /><circle cx="15" cy="15" r="5.500" fill="#4285f4" />
          </Icon>
        </TaskItem>
        <TaskItem mark="wide">
          <Icon w={29} h={27}>
            <path d="M7 0H18V7H7ZM7 7H18V13H7Z" fill="#21a366" /><path d="M18 0H29V7H18Z" fill="#33c481" /><path d="M18 7H29V13H18Z" fill="#21a366" /><path d="M7 13H18V20H7Z" fill="#107c41" /><path d="M18 13H29V20H18Z" fill="#107c41" /><path d="M7 20H29V27H7Z" fill="#185c37" />
            <rect y="6" width="15" height="15" rx="1" fill="#0f7a40" />
            <text x="7.500" y="18" textAnchor="middle" fontSize="12" fontWeight="700" fill="#fff">X</text>
          </Icon>
        </TaskItem>
      </div>
      <div className="ml-auto mr-[24px] flex items-center">
        <Icon w={14} h={8} className="mr-[22px]"><path d="M1.500 7 7 1.500 12.500 7" stroke="#f0f0f0" strokeWidth="2" /></Icon>
        <Icon w={21} h={13} className="mr-[24px]"><circle cx="9" cy="5.500" r="5.500" fill="#8a8a8a" /><path d="M4 13A4 4 0 0 1 4 5Q8 4 10 7Q14 2 17 6Q21 7 21 10T18 13Z" fill="#f0f0f0" /></Icon>
        <div className="mr-[22px] flex flex-col items-center text-[14px] leading-[20px]"><Label w={29}>ENG</Label><Label w={15}>IN</Label></div>
        <Icon w={20} h={15} className="mr-[10px]"><path d="M1 5.500Q10-3 19 5.500M4 8.500Q10 3 16 8.500M7 11.500Q10 8.500 13 11.500" stroke="#f0f0f0" strokeWidth="1.600" /><circle cx="10" cy="13.500" r="1.600" fill="#f0f0f0" /></Icon>
        <Icon w={20} h={16} className="mr-[10px]"><path d="M1 5.500H4L8.500 1V15L4 10.500H1Z" stroke="#f0f0f0" strokeWidth="1.300" /><path d="M11 5Q13 8 11 11M13.500 3Q17 8 13.500 13M16 1Q21 8 16 15" stroke="#f0f0f0" strokeWidth="1.300" /></Icon>
        <Icon w={20} h={13} className="mr-[21px]"><rect x=".7" y=".7" width="16" height="11.600" rx="2.500" stroke="#f0f0f0" strokeWidth="1.400" /><path d="M3 3H9V10H3Z" fill="#f0f0f0" /><path d="M18.500 4V9" stroke="#f0f0f0" strokeWidth="2" /></Icon>
        <div className="flex flex-col items-end text-[14px] leading-[20px]"><Label w={36}>15:58</Label><Label w={77}>20-07-2025</Label></div>
      </div>
    </div>
  );
}

export default function App() {
  return (
    <div className="flex h-[1079px] w-[1919px] flex-col overflow-hidden bg-[#262626] font-['Open_Sans','Noto_Sans',sans-serif]">
      <div className="relative h-[81px] bg-[#0a0a0a]"><Backdrop /><TitleRow /><TabRow /></div>
      <Ribbon />
      <FormulaBar />
      <Worksheet />
      <SheetTabs />
      <StatusBar />
      <Taskbar />
    </div>
  );
}
